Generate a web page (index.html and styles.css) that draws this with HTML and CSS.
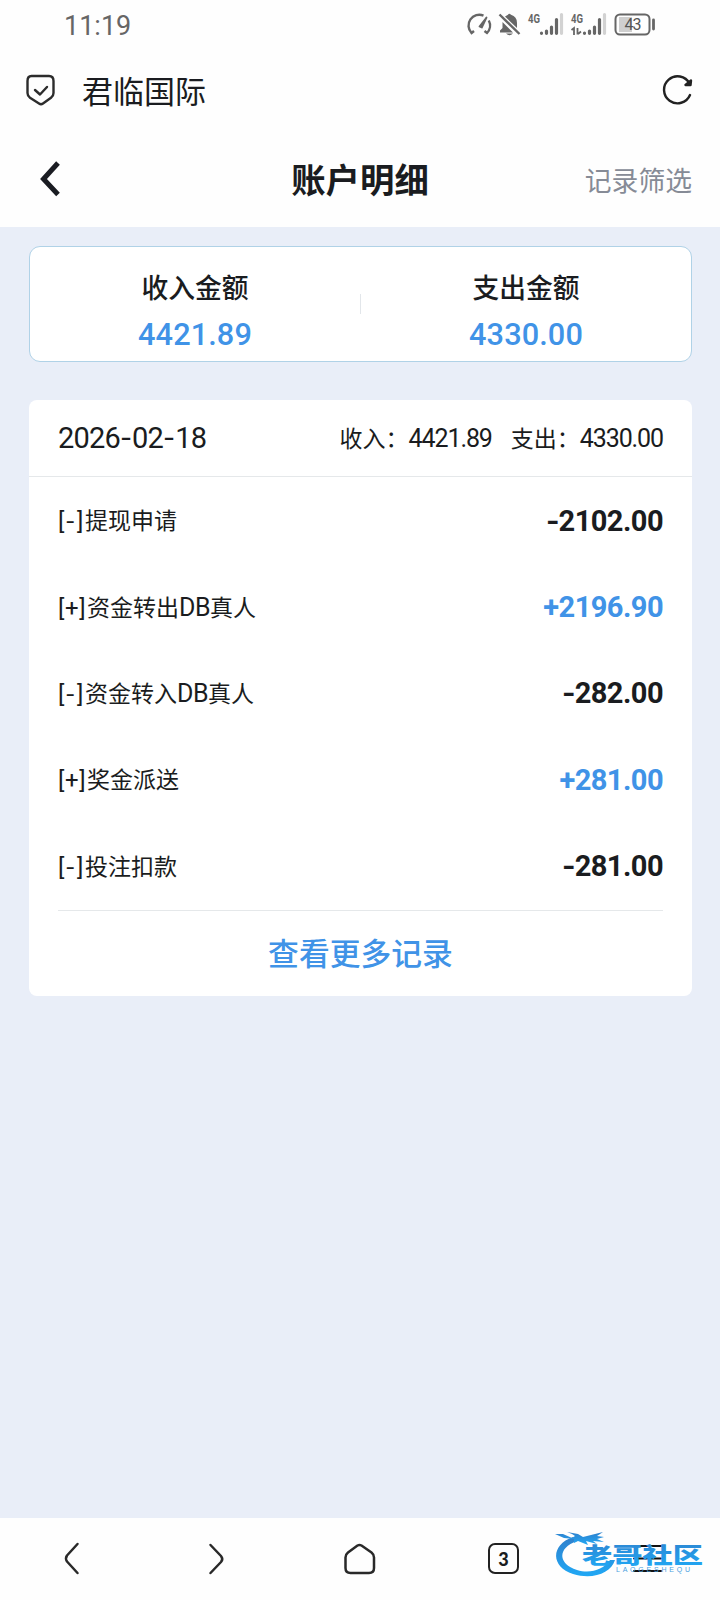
FILE: index.html
```html
<!DOCTYPE html>
<html lang="zh-CN">
<head>
<meta charset="utf-8">
<title>账户明细</title>
<link rel="stylesheet" href="styles.css">
</head>
<body>
<div class="screen">
  <div class="status">
    <span class="clock">11:19</span>
    <svg class="status-icons" width="194" height="30" viewBox="464 10 194 30" fill="none" stroke="#666" stroke-width="2.4">
      <path d="M483.500 15.600A10.800 10.800 0 0 0 471.500 33L474 31M488.800 20.500A10.800 10.800 0 0 1 487 33L484.500 31"/>
      <path d="M479.500 26.500L486.500 17.500L481.800 27.500Z" fill="#666" stroke-width="1.800" stroke-linejoin="round"/>
      <path d="M500 32.500V30.500L502.500 28V22L513 32.500ZM505 16.500L508 14.800Q509 12.500 511 14.800Q517 16.500 517 23V28ZM506 33.500H513Q509.500 37 506 33.500Z" fill="#666" stroke="none"/>
      <path d="M499.500 14.500L519.500 34"/>
      <g stroke-width="3.200" stroke-linecap="round">
        <path d="M541.500 33.200V33.300M546.500 31V33.300M551.500 27V33.300M556.500 19.500V33.300M584.500 33.200V33.300M589.500 31V33.300M594.500 27V33.300M599.500 19.500V33.300"/>
        <path d="M561.500 14.500V33.300M604.500 14.500V33.300" stroke="#d2d2d2"/>
      </g>
      <path d="M571.500 30L574 28V35M577.500 28V34.500M578 34L581 31.500" stroke-width="1.800"/>
      <path d="M619 17H632V32H619Z" fill="#cfcfcf" stroke="none"/>
      <rect x="615.500" y="14.500" width="34" height="20" rx="4.500" stroke-width="2"/>
      <path d="M653.500 20V29" stroke-width="2.800" stroke-linecap="round"/>
      <g class="signal-text" fill="#666" stroke="none">
        <text x="528" y="22.800" textLength="12" lengthAdjust="spacingAndGlyphs">4G</text>
        <text x="571" y="22.800" textLength="12" lengthAdjust="spacingAndGlyphs">4G</text>
      </g>
      <text class="battery-text" x="624.500" y="30" fill="#555" stroke="none" textLength="17">43</text>
    </svg>
  </div>
  <div class="browser-bar">
    <svg width="30" height="32" viewBox="26 74 30 32" fill="none" stroke="#2c2c2c" stroke-width="2.400" stroke-linecap="round" stroke-linejoin="round">
      <path d="M31.500 76H49Q53.500 76 53.500 81V93Q53.500 96 51 97.800L43 103.500Q41 105 39 103.500L30 97.800Q27.500 96 27.500 93V81Q27.500 76 31.500 76Z"/>
      <path d="M35 90L40 94.500L47 87"/>
    </svg>
    <span class="site">君临国际</span>
    <svg class="reload" width="32" height="32" viewBox="661 73 32 32" fill="none" stroke="#222" stroke-width="2.400" stroke-linecap="round" stroke-linejoin="round">
      <path d="M690 95A13.500 13.500 0 1 1 689.500 83.500"/>
      <path d="M685.500 85H690.500L691 80.500Z" fill="#222"/>
    </svg>
  </div>
  <header class="title-bar">
    <svg width="24" height="38" viewBox="38 160 24 38" fill="none" stroke="#1a1c22" stroke-width="5"><path d="M58 163L43.500 179L58 194.500"/></svg>
    <h1 class="title">账户明细</h1>
    <span class="filter">记录筛选</span>
  </header>
  <main class="content">
    <section class="summary">
      <div class="total"><span class="total-name">收入金额</span><span class="total-value">4421.89</span></div>
      <div class="split"></div>
      <div class="total"><span class="total-name">支出金额</span><span class="total-value">4330.00</span></div>
    </section>
    <section class="records">
      <div class="day">
        <span class="date">2026<i class="dash">-</i>02<i class="dash">-</i>18</span>
        <span class="day-totals"><span class="day-name">收入：</span><span class="day-value">4421.89</span><span class="day-name next">支出：</span><span class="day-value">4330.00</span></span>
      </div>
      <div class="rows">
        <div class="row"><span class="label"><span class="sign"><i>[</i><i class="dash">-</i><i>]</i></span>提现申请</span><span class="amount"><i class="dash">-</i>2102.00</span></div>
        <div class="row"><span class="label"><span class="sign plus"><i>[</i><i>+</i><i>]</i></span>资金转出<span class="latin">DB</span>真人</span><span class="amount in">+2196.90</span></div>
        <div class="row"><span class="label"><span class="sign"><i>[</i><i class="dash">-</i><i>]</i></span>资金转入<span class="latin">DB</span>真人</span><span class="amount"><i class="dash">-</i>282.00</span></div>
        <div class="row"><span class="label"><span class="sign plus"><i>[</i><i>+</i><i>]</i></span>奖金派送</span><span class="amount in">+281.00</span></div>
        <div class="row"><span class="label"><span class="sign"><i>[</i><i class="dash">-</i><i>]</i></span>投注扣款</span><span class="amount"><i class="dash">-</i>281.00</span></div>
      </div>
      <div class="more">查看更多记录</div>
    </section>
  </main>
  <nav class="nav">
    <svg width="144" height="82" viewBox="0 1518 144 82"><path d="M77.500 1544L67 1555.500Q65 1558.500 67 1561.500L77.500 1573"/></svg>
    <svg width="144" height="82" viewBox="144 1518 144 82"><path d="M210.500 1545L221 1556Q223.500 1559 221 1562L210.500 1573"/></svg>
    <svg width="144" height="82" viewBox="288 1518 144 82"><path d="M357.500 1545.500Q359.500 1544.500 361.500 1545.500L371.500 1552.500Q374 1554.500 374 1557.500V1568Q374 1573 369 1573H350.500Q345.500 1573 345.500 1568V1557.500Q345.500 1554.500 348 1552.500Z"/></svg>
    <div class="tabs"><span class="tab-count">3</span></div>
    <div class="menu">
      <svg class="brand" width="164" height="60" viewBox="550 1524 164 60">
        <defs><linearGradient id="blue" x1="0" y1="0" x2="0" y2="1"><stop offset="0" stop-color="#2f80cc"/><stop offset="1" stop-color="#20a8f5"/></linearGradient></defs>
        <path class="menu-lines" d="M634 1546H661M634 1558.500H661M634 1571H661"/>
        <path class="brand-ring" d="M573 1537C550 1545 551 1567 573 1574C593 1580 611 1573 615 1560L610 1560C603 1570 590 1574 577 1570C558 1564 557 1548 577 1541Z"/>
        <path class="brand-dragon" d="M555 1534L563 1534L572 1538L575 1536L572 1534L567 1532L578 1534L583 1537L591 1535L603 1532L597 1536L604 1537L597 1539L604 1542L593 1541L597 1544L586 1541L588 1545L578 1541L574 1543V1539L564 1538Z"/>
        <text class="brand-name" x="582" y="1562.500" textLength="121" lengthAdjust="spacingAndGlyphs">老哥社区</text>
        <text class="brand-latin" x="616" y="1572" textLength="74">LAOGESHEQU</text>
      </svg>
    </div>
  </nav>
</div>
</body>
</html>
```

FILE: styles.css
```css
* { box-sizing: border-box; }
body { margin: 0; background: #fff; font-family: Roboto, "Noto Sans CJK SC", sans-serif; color: #1a1c20; }
.screen { width: 720px; height: 1600px; display: flex; flex-direction: column; background: #fefefe; }
.status { height: 50px; display: flex; justify-content: space-between; align-items: center; padding: 0 62px 0 64px; }
.clock { font-size: 27px; color: #666; letter-spacing: 0; padding-top: 2px; }
.signal-text { font: 700 12.5px Roboto, sans-serif; }
.battery-text { font: 400 16px Roboto, sans-serif; }
.browser-bar { height: 80px; display: flex; align-items: center; padding: 0 27px 0 26px; }
.site { flex: 1; padding: 6px 0 0 26px; font-size: 31px; line-height: 44px; }
.reload { margin-bottom: 2px; }
.title-bar { height: 97px; display: grid; grid-template-columns: 1fr auto 1fr; align-items: center; padding: 0 28px 0 38px; }
.title { margin: 0 0 0 -10px; padding-top: 5px; font-size: 34.4px; line-height: 50px; font-weight: 700; }
.filter { justify-self: end; padding-top: 2px; font-size: 26.8px; color: #868b96; }
.content { flex: 1; background: #e9eef8; padding: 19px 28px 0 29px; }
.summary { height: 116px; display: flex; align-items: center; background: #fff; border: 1px solid #b0d2e7; border-radius: 11px; }
.total { flex: 1; display: flex; flex-direction: column; align-items: center; padding-top: 14px; }
.total-name { font-size: 26.8px; line-height: 40px; font-weight: 500; padding-top: 4px; }
.total-value { font-size: 30.7px; line-height: 46px; font-weight: 500; color: #4093e7; letter-spacing: .1px; padding-top: 3px; }
.split { width: 1px; height: 20px; background: #e2e6ea; }
.records { height: 596px; margin-top: 38px; background: #fff; border-radius: 8px; }
.day { height: 77px; display: flex; justify-content: space-between; align-items: center; border-bottom: 1px solid #e5e8ea; padding: 0 29px; }
.date { font-size: 29px; letter-spacing: -.8px; }
.date .dash { margin: 0 2.7px 0 2.2px; }
.day-totals { display: flex; align-items: center; }
.day-name { font-size: 23px; margin-top: -2px; }
.day-name.next { margin-left: 19px; }
.day-value { font-size: 25px; letter-spacing: -1.1px; }
.rows { height: 434px; margin: 0 29px; border-bottom: 1px solid #e5e8ea; display: grid; grid-template-rows: repeat(5, 86.4px); }
.row { display: flex; justify-content: space-between; align-items: center; font-size: 23px; }
.label { margin-top: -2px; }
.sign { display: inline-flex; justify-content: space-between; width: 25.5px; margin-right: 1.5px; font-size: 24px; }
.sign i { font-style: normal; }
.sign.plus { width: 27.5px; }
.latin { font-size: 25px; letter-spacing: -.5px; }
.amount { font-size: 29px; font-weight: 700; letter-spacing: -.55px; padding-top: 1px; }
.dash { font-style: normal; display: inline-block; transform: scaleX(1.2); }
.amount .dash { margin-right: 1px; }
.in { color: #4093e7; }
.more { height: 85px; display: flex; align-items: center; justify-content: center; padding-bottom: 4px; font-size: 30.8px; font-weight: 500; color: #4093e7; }
.nav { height: 82px; display: grid; grid-template-columns: repeat(5, 144px); }
.nav path { fill: none; stroke: #292929; stroke-width: 2.5; stroke-linecap: round; stroke-linejoin: round; }
.tabs { display: flex; align-items: center; justify-content: center; padding: 0 1px 1px 0; }
.tab-count { width: 31px; height: 31px; border: 2.5px solid #222; border-radius: 7px; display: flex; align-items: center; justify-content: center; font: 900 18px Lato, sans-serif; }
.menu { position: relative; }
.brand { position: absolute; left: -26px; top: 6px; }
.nav .brand-ring, .nav .brand-dragon { fill: url(#blue); stroke: none; }
.nav .menu-lines { stroke: #111; stroke-width: 2; }
.brand-name { font: 900 22px "Noto Sans CJK SC", sans-serif; fill: url(#blue); }
.brand-latin { font: 400 7px "Liberation Sans", sans-serif; fill: #4ba0df; }
```
